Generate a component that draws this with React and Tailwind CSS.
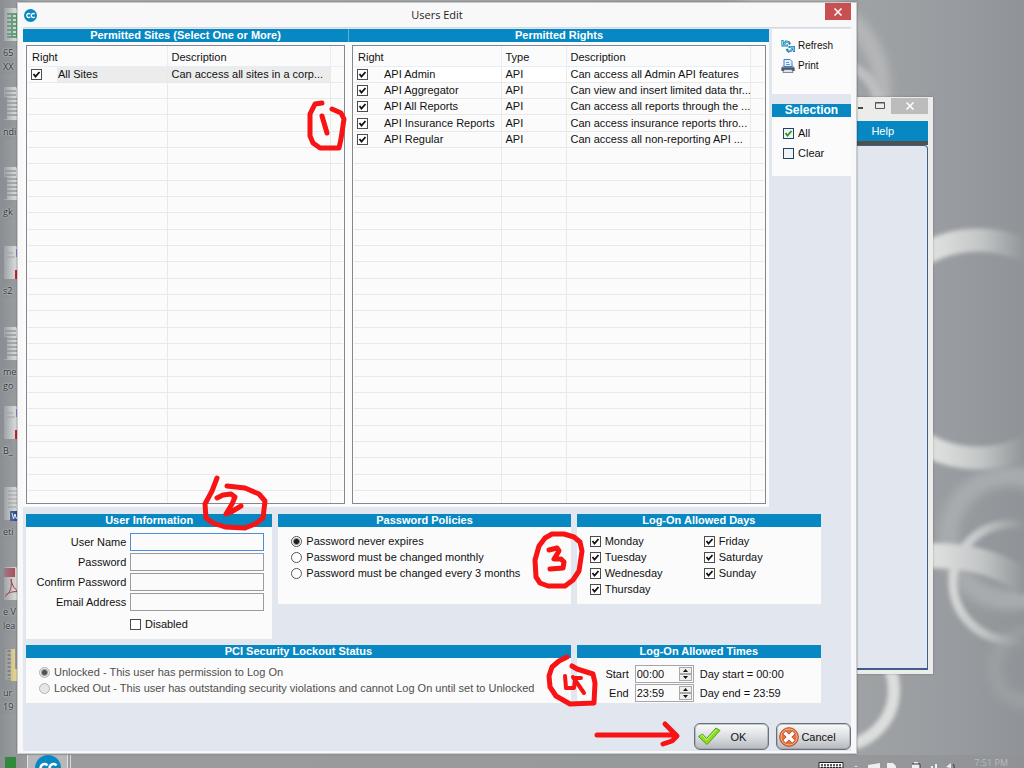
import { useId } from "react";

const sites = [{ name: "All Sites", description: "Can access all sites in a corp..." }];

const rights = [
  { name: "API Admin", type: "API", description: "Can access all Admin API features" },
  { name: "API Aggregator", type: "API", description: "Can view and insert limited data thr..." },
  { name: "API All Reports", type: "API", description: "Can access all reports through the ..." },
  { name: "API Insurance Reports", type: "API", description: "Can access insurance reports thro..." },
  { name: "API Regular", type: "API", description: "Can access all non-reporting API ..." },
];

const days = ["Monday", "Tuesday", "Wednesday", "Thursday", "Friday", "Saturday", "Sunday"];

const desktopIcons = [
  { kind: "sheet", top: "top-[8px]", lines: ["65", "XX"] },
  { kind: "doc", top: "top-[87px]", lines: ["ndi"] },
  { kind: "doc", top: "top-[167px]", lines: ["gk"] },
  { kind: "pdf", top: "top-[246px]", lines: ["s2"] },
  { kind: "doc", top: "top-[327px]", lines: ["me", "go"] },
  { kind: "pdf", top: "top-[406px]", lines: ["B_"] },
  { kind: "word", top: "top-[487px]", lines: ["eti"] },
  { kind: "acrobat", top: "top-[567px]", lines: ["e V", "lea"] },
  { kind: "zip", top: "top-[648px]", lines: ["ur", "19"] },
];

function Wallpaper() {
  return (
    <svg
      className="absolute inset-0 h-full w-full"
      viewBox="0 0 1024 768"
      preserveAspectRatio="xMaxYMid slice"
      aria-hidden="true"
    >
      <defs>
        <linearGradient id="wall" x1="0" x2="1" y1="0" y2="0">
          <stop offset="0" stopColor="#8a8e92" />
          <stop offset="0.03" stopColor="#a9acad" />
          <stop offset="0.8" stopColor="#a2a5a7" />
          <stop offset="0.93" stopColor="#989ca0" />
          <stop offset="1" stopColor="#909498" />
        </linearGradient>
        <linearGradient id="fade" x1="940" x2="1024" y1="0" y2="0" gradientUnits="userSpaceOnUse">
          <stop offset="0" stopColor="#dcdedd" />
          <stop offset="0.5" stopColor="#c2c5c5" />
          <stop offset="1" stopColor="#919599" />
        </linearGradient>
        <filter id="soft" x="-20%" y="-20%" width="140%" height="140%">
          <feGaussianBlur stdDeviation="2" />
        </filter>
        <filter id="softer" x="-20%" y="-20%" width="140%" height="140%">
          <feGaussianBlur stdDeviation="4" />
        </filter>
      </defs>
      <rect width="1024" height="768" fill="url(#wall)" />
      <g fill="none" filter="url(#softer)">
        <circle cx="790" cy="90" r="92" stroke="#b3b5b6" strokeWidth="18" />
        <circle cx="1010" cy="538" r="62" stroke="#a8abad" strokeWidth="20" />
        <circle cx="1028" cy="668" r="34" stroke="#9b9fa2" strokeWidth="14" />
        <path d="M857 640h50" stroke="#b9bbbc" strokeWidth="8" />
      </g>
      <g fill="none" filter="url(#soft)">
        <circle cx="835" cy="108" r="44" stroke="#bcbebf" strokeWidth="10" />
        <circle cx="978" cy="349" r="109" stroke="url(#fade)" strokeWidth="23" />
        <path d="M925 556C962 554 1000 562 1030 586" stroke="url(#fade)" strokeWidth="25" />
        <circle cx="1011" cy="582" r="58" stroke="url(#fade)" strokeWidth="9" />
        <circle cx="838" cy="690" r="56" stroke="#dcdedd" strokeWidth="12" />
      </g>
    </svg>
  );
}

function DesktopIcon({ kind, top, lines }) {
  return (
    <div className={`absolute left-0 w-5 ${top}`}>
      <svg width="20" height="34" viewBox="0 0 20 34" aria-hidden="true">
        {kind === "zip" ? (
          <>
            <path d="M5 1h8v31H5z" fill="#b9b9aa" />
            <path d="M11 1h4v20h5v12H11z" fill="#e9d98c" />
            <path d="M9 2v29" stroke="#77797a" strokeWidth="3" strokeDasharray="2 2" />
          </>
        ) : (
          <path d="M4 0h12l4 5v28H4z" fill="#dadcdc" />
        )}
        {kind === "sheet" && (
          <path d="M7 6h13M7 10h13M7 14h13M7 18h13M7 22h13M7 26h13M7 29h13M12 5v25M17 5v25" stroke="#5da477" strokeWidth="2" />
        )}
        {kind === "doc" && (
          <>
            <path d="M5 4h11M5 8h11M7 12h13M7 16h13M7 20h13M7 24h13M7 28h13" stroke="#77797b" />
            <path d="M4 10h3v22H4z" fill="#8e98a4" />
          </>
        )}
        {kind === "pdf" && (
          <>
            <path d="M7 7h6M7 11h8" stroke="#a7a9b0" />
            <path d="M16 3h4v8h-4z" fill="#8b88c7" />
            <path d="M15 24h5v9h-5z" fill="#c7232f" />
          </>
        )}
        {kind === "word" && (
          <>
            <path d="M8 4h12M8 8h12M8 12h12M8 16h12M8 20h8" stroke="#a0a2a6" />
            <path d="M10 24h10v10H10z" fill="#2b4f9c" />
            <path d="M12 26l1.500 6 1.500-5 1.500 5" stroke="#fff" fill="none" />
          </>
        )}
        {kind === "acrobat" && (
          <>
            <path d="M4 1h11v9H4z" fill="#b5485a" />
            <path d="M5 30c6-5 7-11 6-18 1 7 4 11 9 13M5 28c5-3 9-4 15-3" stroke="#a8202c" fill="none" />
          </>
        )}
      </svg>
      <div className="absolute inset-y-0 left-0 w-4 bg-linear-to-r from-[#8b8f93] to-transparent" />
      <div className="relative mt-1 font-['Open_Sans',sans-serif] text-[9px] leading-[14px] text-[#2c2e30] [text-shadow:0_0_2px_#fff]">
        {lines.map((line) => (
          <p key={line} className="whitespace-nowrap pl-[3px]">
            {line}
          </p>
        ))}
      </div>
    </div>
  );
}

function Logo({ size }) {
  return (
    <svg width={size} height={size} viewBox="0 0 26 26" aria-hidden="true">
      <circle cx="13" cy="13" r="13" fill="#0788c2" />
      <path
        d="M12.500 10.300a4 4 0 1 0 0 5.400M21.500 10.300a4 4 0 1 0 0 5.400"
        fill="none"
        stroke="#fff"
        strokeWidth="2.600"
      />
    </svg>
  );
}

function CheckBox({ green = false, ...props }) {
  return (
    <span className="relative flex size-[11px] shrink-0">
      <input
        type="checkbox"
        className={
          green
            ? "peer size-[11px] appearance-none border border-[#1f4468] bg-[#f1f3f5]"
            : "peer size-[11px] appearance-none border border-[#4c4c4c] bg-white"
        }
        {...props}
      />
      <svg
        className="pointer-events-none absolute inset-0 hidden peer-checked:block"
        viewBox="0 0 11 11"
        aria-hidden="true"
      >
        <path d="M2.500 5l2 2.500L8.500 3" fill="none" stroke={green ? "#1f9a1f" : "#111"} strokeWidth="1.800" />
      </svg>
    </span>
  );
}

function CheckOption({ label, ...props }) {
  return (
    <label className="flex h-4 items-center gap-1">
      <CheckBox {...props} />
      {label}
    </label>
  );
}

function RadioOption({ label, disabled, ...props }) {
  return (
    <label className={disabled ? "flex h-4 items-center gap-1 text-[#4e4e4e]" : "flex h-4 items-center gap-1"}>
      <input
        type="radio"
        disabled={disabled}
        className="size-[11px] shrink-0 appearance-none rounded-full border border-[#555] bg-white checked:bg-[radial-gradient(circle,#1c1c1c_2px,#fff_4px)] disabled:border-[#b4b4b4] disabled:bg-[#e6e6e6] disabled:checked:bg-[radial-gradient(circle,#505050_2px,#e8e8e8_4px)]"
        {...props}
      />
      {label}
    </label>
  );
}

function BarTitle({ children, className = "text-[11px]" }) {
  return (
    <h2 className={`h-[13px] overflow-hidden bg-[#0788c2] text-center font-bold leading-[13px] text-white ${className}`}>
      {children}
    </h2>
  );
}

function Panel({ title, className = "", children }) {
  return (
    <section className={`bg-[#fbfbfb] ${className}`}>
      <BarTitle>{title}</BarTitle>
      {children}
    </section>
  );
}

function ListTable({ label, columns, rows, highlight }) {
  const id = useId();
  const blanks = 26 - rows.length;
  return (
    <div className="min-h-0 border border-[#828790] bg-[#fbfbfb] px-px">
      <table aria-label={label} className="h-full w-full table-fixed border-collapse">
        <thead>
          <tr>
            {columns.map((column) => (
              <th
                key={column.title}
                scope="col"
                className={`h-5 border-b border-[#e6eff8] border-r p-0 pl-1 pt-[2px] text-left font-normal ${column.width}`}
              >
                {column.title}
              </th>
            ))}
            <td className="border-b border-[#e6eff8]" />
          </tr>
        </thead>
        <tbody>
          {rows.map((row, i) => (
            <tr key={row.name} className="border-b border-[#e9e9e9]">
              <td className="h-4 border-r border-[#e9e9e9] p-0">
                <div className="flex items-center gap-[15px] pl-[3px]">
                  <CheckBox id={id + i} defaultChecked />
                  <label
                    htmlFor={id + i}
                    className={`flex-1 whitespace-nowrap pl-px leading-[15px] ${i === 0 ? highlight : ""}`}
                  >
                    {row.name}
                  </label>
                </div>
              </td>
              {row.type && (
                <td className={`border-r border-[#e9e9e9] p-0 pl-1 leading-[15px] ${i === 0 ? highlight : ""}`}>
                  {row.type}
                </td>
              )}
              <td
                className={`whitespace-nowrap border-r border-[#e9e9e9] p-0 pl-1 leading-[15px] ${i === 0 ? highlight : ""}`}
              >
                {row.description}
              </td>
              <td />
            </tr>
          ))}
          {Array.from({ length: blanks }, (_, i) => (
            <tr key={i} className="border-b border-[#e9e9e9]">
              {columns.map((column) => (
                <td key={column.title} className="h-4 border-r border-[#e9e9e9] p-0" />
              ))}
              <td />
            </tr>
          ))}
          <tr>
            {columns.map((column) => (
              <td key={column.title} className="h-3 border-r border-[#e9e9e9] p-0" />
            ))}
            <td />
          </tr>
        </tbody>
      </table>
    </div>
  );
}

function Lists() {
  return (
    <div className="grid min-w-0 flex-1 grid-cols-[326fr_420fr] grid-rows-[13px_1fr] bg-[#fbfbfb]">
      <BarTitle className="border-r border-[#62b0d8] text-[11px]">Permitted Sites (Select One or More)</BarTitle>
      <BarTitle>Permitted Rights</BarTitle>
      <div className="grid min-h-0 pb-[3px] pl-[3px] pr-1 pt-[3px]">
        <ListTable
          label="Permitted Sites"
          rows={sites}
          highlight="bg-[#ececec]"
          columns={[
            { title: "Right", width: "w-[139px]" },
            { title: "Description", width: "w-[163px]" },
          ]}
        />
      </div>
      <div className="grid min-h-0 p-[3px]">
        <ListTable
          label="Permitted Rights"
          rows={rights}
          highlight="bg-white"
          columns={[
            { title: "Right", width: "w-[147px]" },
            { title: "Type", width: "w-[65px]" },
            { title: "Description", width: "w-[184px]" },
          ]}
        />
      </div>
    </div>
  );
}

function RefreshIcon() {
  return (
    <svg width="14" height="14" viewBox="0 0 14 14" fill="none" aria-hidden="true">
      <path d="M1.500 1v5.500H7M2 6l3-3.500 3 1 1 2" stroke="#2584b0" strokeWidth="2.200" />
      <path d="M13 13V8H7.500M12.500 8.500l-2.500 3-2.500 1L5.500 10" stroke="#2584b0" strokeWidth="2.200" />
      <path d="M1.500 2v4H6M3 5l2-2.300 2.500.7M12.800 12V8.200h-4M11.500 9.500L9.500 11.800l-2-.2" stroke="#86d6f2" />
    </svg>
  );
}

function PrintIcon() {
  return (
    <svg width="14" height="14" viewBox="0 0 14 14" aria-hidden="true">
      <path d="M3 .5h6l2 2v5H3z" fill="#e4f1ff" stroke="#3f7fd0" />
      <path d="M5 3.500h3M5 5.500h4" stroke="#5b97dd" />
      <path d="M1.500 7L3 6v2h8V6l1.500 1 1 2v2.500H.5V9z" fill="#9aa4b4" />
      <path d="M.5 8.500h13V12H.5z" fill="#4b5567" />
      <path d="M3 10.500h8l1 3H2z" fill="#dfe3ea" stroke="#555f70" strokeWidth=".7" />
    </svg>
  );
}

function SidePanel() {
  return (
    <aside className="flex w-[79px] shrink-0 flex-col gap-[10px]">
      <div className="flex h-[65px] flex-col bg-[#fbfbfb] pl-[9px] pt-[7px] text-[10px]">
        <button type="button" className="flex h-5 items-center gap-[3px]">
          <RefreshIcon />
          Refresh
        </button>
        <button type="button" className="flex h-5 items-center gap-[3px]">
          <PrintIcon />
          Print
        </button>
      </div>
      <section className="bg-[#fbfbfb] pb-[13px]">
        <BarTitle className="text-[12px]">Selection</BarTitle>
        <div className="flex flex-col pl-[11px] pt-[6px]">
          <label className="flex h-5 items-center gap-1">
            <CheckBox green defaultChecked />
            All
          </label>
          <label className="flex h-5 items-center gap-1">
            <CheckBox green />
            Clear
          </label>
        </div>
      </section>
    </aside>
  );
}

function Field({ label, type = "text", active = false }) {
  const id = useId();
  return (
    <div className="flex items-center gap-1">
      <label htmlFor={id} className="flex-1 text-right">
        {label}
      </label>
      <input
        id={id}
        type={type}
        className={
          active
            ? "h-[18px] w-[134px] border border-[#4a90d9] bg-[#fbfbfb] px-1 outline-none"
            : "h-[18px] w-[134px] border border-[#9a9ca2] bg-[#fbfbfb] px-1 outline-none"
        }
      />
    </div>
  );
}

function TimeField({ label, value, note }) {
  const id = useId();
  return (
    <div className="flex h-[19px] items-center">
      <label htmlFor={id} className="w-[52px] text-right">
        {label}
      </label>
      <div className="ml-[6px] flex h-[18px] w-[59px] border border-[#a4a6aa] bg-[#fbfbfb] p-px">
        <input id={id} defaultValue={value} className="min-w-0 flex-1 outline-none" />
        <div className="flex w-[13px] flex-col">
          <button
            type="button"
            aria-label={`${label} later`}
            className="flex flex-1 items-center justify-center border border-[#a8a8a8] bg-[#efefef]"
          >
            <svg width="5" height="3" viewBox="0 0 5 3">
              <path d="M0 3L2.500 0 5 3z" fill="#111" />
            </svg>
          </button>
          <button
            type="button"
            aria-label={`${label} earlier`}
            className="flex flex-1 items-center justify-center border border-[#a8a8a8] bg-[#efefef]"
          >
            <svg width="5" height="3" viewBox="0 0 5 3">
              <path d="M0 0L2.500 3 5 0z" fill="#111" />
            </svg>
          </button>
        </div>
      </div>
      <span className="ml-[6px] whitespace-nowrap">{note}</span>
    </div>
  );
}

function DialogButton({ icon, children }) {
  return (
    <button
      type="button"
      className="flex h-[27px] w-[75px] items-center rounded-md border border-[#6a7179] bg-linear-to-b from-[#fafafa] via-[#dcdfe2] to-[#b6bac0] pl-[2px] shadow-[inset_0_0_0_1px_#8d949c80]"
    >
      {icon}
      <span className="flex-1 pr-3 text-center">{children}</span>
    </button>
  );
}

function UsersEdit() {
  return (
    <main className="absolute bottom-[14px] left-[17px] right-[167px] top-[2px] flex flex-col border border-[#c9cbce] bg-[#f8f8f8] px-[5px] pb-[2px] shadow-[0_0_2px_#0006]">
      <header className="flex h-6 shrink-0 items-center">
        <div className="w-[26px] pl-px">
          <Logo size={13} />
        </div>
        <h1 className="flex-1 text-center font-['Open_Sans',sans-serif] text-[11px] text-[#1c1c1c]">Users Edit</h1>
        <button
          type="button"
          aria-label="Close"
          className="flex h-[17px] w-[26px] items-center justify-center self-start bg-[#c75050]"
        >
          <svg width="8" height="8" viewBox="0 0 8 8">
            <path d="M.5.5l7 7M7.500.5l-7 7" stroke="#fff" strokeWidth="1.500" />
          </svg>
        </button>
      </header>

      <div className="flex min-h-0 flex-1 flex-col border-t border-[#d4d8e0] bg-[#e2e6ef] pt-px">
        <div className="flex min-h-0 flex-1 gap-[3px]">
          <Lists />
          <SidePanel />
        </div>

        <div className="mt-[7px] grid grid-cols-[246fr_292fr_244fr] items-start gap-x-[6px] gap-y-[6px] pl-[3px] pr-[30px]">
          <Panel title="User Information" className="h-[125px]">
            <div className="flex flex-col gap-[2px] pr-2 pt-[6px]">
              <Field label="User Name" active />
              <Field label="Password" type="password" />
              <Field label="Confirm Password" type="password" />
              <Field label="Email Address" />
            </div>
            <div className="mt-[5px] pl-[104px]">
              <CheckOption label="Disabled" />
            </div>
          </Panel>

          <Panel title="Password Policies" className="h-[90px]">
            <div className="pl-[13px] pt-[6px]">
              <RadioOption name="policy" label="Password never expires" defaultChecked />
              <RadioOption name="policy" label="Password must be changed monthly" />
              <RadioOption name="policy" label="Password must be changed every 3 months" />
            </div>
          </Panel>

          <Panel title="Log-On Allowed Days" className="h-[90px]">
            <div className="grid grid-flow-col grid-cols-[114px_1fr] grid-rows-4 pl-[13px] pt-[6px]">
              {days.map((day) => (
                <CheckOption key={day} label={day} defaultChecked />
              ))}
            </div>
          </Panel>

          <Panel title="PCI Security Lockout Status" className="col-span-2 h-[58px]">
            <div className="whitespace-nowrap pl-[13px] pt-[6px]">
              <RadioOption name="lockout" label="Unlocked - This user has permission to Log On" defaultChecked disabled />
              <RadioOption
                name="lockout"
                label="Locked Out - This user has outstanding security violations and cannot Log On until set to Unlocked"
                disabled
              />
            </div>
          </Panel>

          <Panel title="Log-On Allowed Times" className="h-[58px]">
            <div className="pt-[6px]">
              <TimeField label="Start" value="00:00" note="Day start = 00:00" />
              <TimeField label="End" value="23:59" note="Day end = 23:59" />
            </div>
          </Panel>
        </div>

        <footer className="mb-px mt-5 flex justify-end gap-[7px]">
          <DialogButton
            icon={
              <svg width="24" height="20" viewBox="0 0 24 20" aria-hidden="true">
                <path
                  d="M1.500 9.500l4-2.500 4 4.500L19 1l4 2.500L10 17.500z"
                  fill="#8edc1c"
                  stroke="#4fa31c"
                  strokeLinejoin="round"
                />
                <path d="M4 9.200L5.500 8.300l4 4.700L19.500 2.500" fill="none" stroke="#d2f78c" />
              </svg>
            }
          >
            OK
          </DialogButton>
          <DialogButton
            icon={
              <svg className="shrink-0" width="20" height="20" viewBox="0 0 20 20" aria-hidden="true">
                <circle cx="10" cy="10" r="9.300" fill="#e5733f" stroke="#b9481c" />
                <circle cx="10" cy="10" r="8" fill="none" stroke="#f6b48f" />
                <path d="M5 5l10 10M15 5L5 15" stroke="#b9481c" strokeWidth="4.600" />
                <path d="M5.500 5.500l9 9M14.500 5.500l-9 9" stroke="#fff" strokeWidth="3.400" />
              </svg>
            }
          >
            Cancel
          </DialogButton>
        </footer>
      </div>
    </main>
  );
}

function BackWindow() {
  return (
    <section
      aria-label="Application window"
      className="absolute bottom-[94px] right-[91px] top-[97px] flex w-[140px] flex-col bg-[#ececea] pb-1 pr-[5px] shadow-[0_0_2px_#0004]"
    >
      <div className="flex h-6 items-start justify-end">
        <svg className="mr-[5px] mt-1" width="28" height="10" viewBox="0 0 28 10" fill="none" aria-hidden="true">
          <path d="M0 7h5" stroke="#111" strokeWidth="1.500" />
          <path d="M17.500 1.500h9v6h-9z" stroke="#555" />
          <path d="M17 2h10" stroke="#555" />
        </svg>
        <button type="button" aria-label="Close window" className="mt-px flex h-4 w-[37px] items-center justify-center bg-[#bcbcbc]">
          <svg width="8" height="8" viewBox="0 0 8 8">
            <path d="M.5.5l7 7M7.500.5l-7 7" stroke="#fff" strokeWidth="1.500" />
          </svg>
        </button>
      </div>
      <nav className="flex h-5 items-center justify-end bg-[#0788c2] pr-[34px]">
        <a href="#help" className="text-white">
          Help
        </a>
      </nav>
      <div className="h-1 bg-[#50504e]" />
      <div className="flex-1 rounded-tr-sm border-b-2 border-r border-t border-[#3f5f86] bg-[#e2e6ef]" />
    </section>
  );
}

function Taskbar() {
  return (
    <div className="absolute inset-x-0 bottom-0 flex h-[13px] items-start overflow-hidden bg-[#8f9193]/60">
      <div className="ml-[5px] size-[11px] self-end bg-[#2f8a3c]" />
      <div className="ml-[11px] flex w-[41px] justify-center border-x border-[#e2e2e2] bg-[#c3c5c6]/70 pb-4">
        <Logo size={26} />
      </div>
      <div className="ml-[2px] h-[13px] w-px bg-[#dadada]" />
      <svg className="ml-auto" width="150" height="13" viewBox="0 0 150 13" aria-hidden="true">
        <path d="M1 7.500h24V13H1z" fill="#fff" stroke="#222" />
        <path d="M3 10h20M3 12.500h20" stroke="#222" strokeWidth="1.500" strokeDasharray="2 1" />
        <path d="M36 12l2-1.500 2 1.500z" fill="#ddd" />
        <path d="M50 10l12-2v5H50zM69 8h6l3 3v2h-9zM94 9h8v4h-8zM96 7h4v2h-4zM117 9h2v4h-2zM113 11h2v2h-2zM128 12l5-4v5z" fill="#eee" />
        <path d="M94 9h8v4M135 9q2 2 1 4" fill="none" stroke="#333" />
      </svg>
      <span className="mr-4 mt-[2px] whitespace-nowrap pl-[6px] font-['Open_Sans',sans-serif] text-[9px] leading-[11px] text-[#b9bbbd]">
        7:51 PM
      </span>
    </div>
  );
}

function Annotations() {
  return (
    <svg
      className="pointer-events-none absolute left-0 top-0"
      width="1024"
      height="768"
      viewBox="0 0 1024 768"
      fill="none"
      stroke="#f81414"
      strokeWidth="5"
      strokeLinecap="round"
      strokeLinejoin="round"
      aria-hidden="true"
    >
      <path d="M322 103l-7 1-5 10v22l3 7 7 5h19l2-9 3-20-3-6-9-4M322 116l5 17" />
      <path d="M217 478l-5 13-7 13 1 14 7 5 12 4 20 1 10-4 8-6 2-17-6-7-14-6-18-2" />
      <path d="M217 498l6-3 8-1 4 3-3 7-6 10 5-2 10-6" />
      <path d="M552 534l-7 4-6 8-4 14 1 17 4 6 8 3h17l8-6 6-9 3-20-2-9-6-5-10-3h-12" />
      <path d="M549 550l8-2 2 3-5 8h7l3 3-1 6-13 1" />
      <path d="M572 666l5 3 16 5 2 9-1 20-24 1-14-8-6-9-1-11 3-9 7-6 8-4" />
      <path d="M565 676l1 12h8l1-8M573 677l11 16M574 678h7" strokeWidth="4" />
      <path d="M597 735h78M665 724l12 12-5 5-9 3" />
    </svg>
  );
}

export default function App() {
  return (
    <div className="relative h-screen overflow-hidden bg-[#a0a3a5] font-['Liberation_Sans',Arial,sans-serif] text-[11px] leading-4 text-[#111]">
      <Wallpaper />
      {desktopIcons.map((icon) => (
        <DesktopIcon key={icon.top} {...icon} />
      ))}
      <BackWindow />
      <Taskbar />
      <UsersEdit />
      <Annotations />
    </div>
  );
}
